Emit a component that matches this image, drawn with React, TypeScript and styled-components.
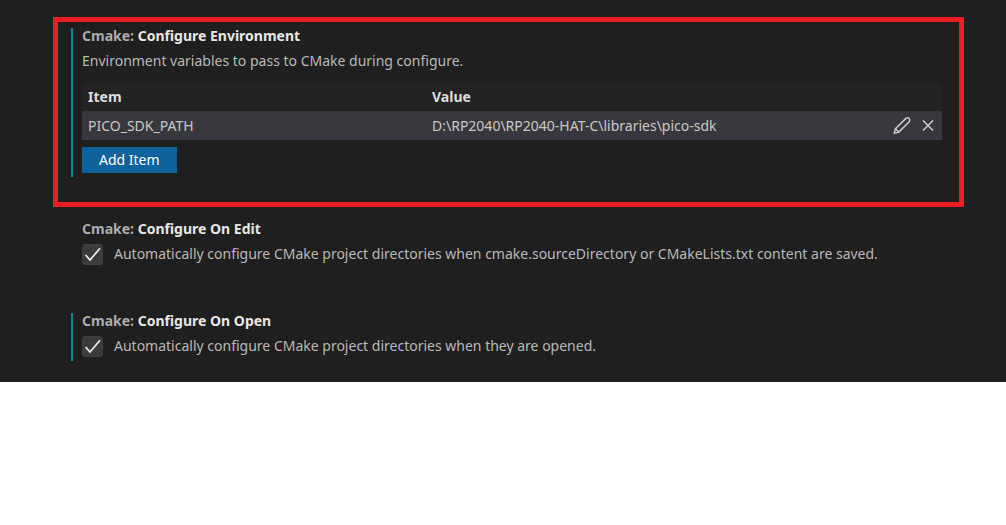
import React from "react";
import styled, { createGlobalStyle } from "styled-components";

const GlobalStyle = createGlobalStyle`
  * { box-sizing: border-box; }
  body {
    margin: 0;
    background: #ffffff;
    font-family: "Segoe UI", "Noto Sans", sans-serif;
    font-size: 14px;
    color: #b9b9b9;
  }
`;

const Panel = styled.main`
  background: #1f1f1f;
  padding: 17px 42px 21px 53px;
`;

const Highlight = styled.div`
  border: 5px solid #ee1c25;
  padding: 6px 17px 25px 13px;
  margin-bottom: 14px;
`;

const SettingList = styled.div`
  display: flex;
  flex-direction: column;
  gap: 44px;
  padding-left: 18px;
`;

const Setting = styled.section<{ $modified?: boolean }>`
  border-left: 2px solid ${(p) => (p.$modified ? "#0b83a4" : "transparent")};
  padding: 0 0 4px 9px;
`;

const Title = styled.h2`
  margin: 0 0 7px;
  font-size: 14px;
  line-height: 16px;
  font-weight: 700;
  color: #e7e7e7;
`;

const Category = styled.span`
  color: #acacac;
`;

const Description = styled.p`
  margin: 0 0 12px;
  line-height: 20px;
`;

const Table = styled.table`
  width: 100%;
  table-layout: fixed;
  border-collapse: collapse;
  line-height: 20px;
  text-align: left;
`;

const HeadRow = styled.tr`
  height: 28px;
  background: #232323;
  color: #dddddd;
`;

const ItemRow = styled.tr`
  height: 29px;
  background: #38373d;
  color: #c8c8c8;
`;

const HeadCell = styled.th<{ $width?: string }>`
  width: ${(p) => p.$width ?? "auto"};
  padding: 0 6px;
  font-weight: 700;
`;

const Cell = styled.td`
  padding: 0 4px 0 6px;
`;

const Actions = styled.div`
  display: flex;
  justify-content: flex-end;
  gap: 6px;
`;

const IconButton = styled.button`
  display: flex;
  padding: 0;
  border: 0;
  background: none;
  color: #cccccc;
`;

const AddButton = styled.button`
  display: block;
  height: 26px;
  margin-top: 7px;
  padding: 0 17px;
  border: 0;
  background: #0e639c;
  color: #ffffff;
  font: inherit;
  line-height: 20px;
`;

const CheckLabel = styled.label`
  display: flex;
  align-items: flex-start;
  gap: 11px;
  line-height: 20px;
`;

const CheckBox = styled.span`
  display: grid;
  flex: none;
  width: 21px;
  height: 21px;

  > * {
    grid-area: 1 / 1;
  }

  svg {
    pointer-events: none;
  }

  input:not(:checked) + svg {
    visibility: hidden;
  }
`;

const CheckInput = styled.input`
  appearance: none;
  width: 21px;
  height: 21px;
  margin: 0;
  border: 1px solid #404040;
  border-radius: 3px;
  background: #3b3b3b;
`;

const PencilIcon = () => (
  <svg width="20" height="20" viewBox="0 0 20 20" fill="none" stroke="currentColor" strokeWidth="1.5" strokeLinejoin="round" aria-hidden="true">
    <path d="M2.2 17.4 3.4 12.8 13.9 2.4Q15.4 1.2 17.2 2.4 18.5 4.2 17.2 5.7L6.8 16.1Z" />
    <path d="M3.4 12.8 6.8 16.1" />
  </svg>
);

const CloseIcon = () => (
  <svg width="20" height="20" viewBox="0 0 20 20" fill="none" stroke="currentColor" strokeWidth="1.6" aria-hidden="true">
    <path d="M5 4.5 15 14.5M15 4.5 5 14.5" />
  </svg>
);

function SettingTitle({ name }: { name: string }) {
  return (
    <Title>
      <Category>Cmake:</Category> {name}
    </Title>
  );
}

function ToggleSetting({ name, text, modified }: { name: string; text: string; modified?: boolean }) {
  return (
    <Setting $modified={modified}>
      <SettingTitle name={name} />
      <CheckLabel>
        <CheckBox>
          <CheckInput type="checkbox" defaultChecked />
          <svg width="21" height="21" viewBox="0 0 21 21" fill="none" stroke="#f0f0f0" strokeWidth="1.7" aria-hidden="true">
            <path d="M3.5 11 8 16 18 4.3" />
          </svg>
        </CheckBox>
        {text}
      </CheckLabel>
    </Setting>
  );
}

export default function App() {
  return (
    <>
      <GlobalStyle />
      <Panel>
        <Highlight>
          <Setting $modified>
            <SettingTitle name="Configure Environment" />
            <Description>Environment variables to pass to CMake during configure.</Description>
            <Table>
              <thead>
                <HeadRow>
                  <HeadCell $width="40%">Item</HeadCell>
                  <HeadCell>Value</HeadCell>
                  <HeadCell as="td" $width="64px" />
                </HeadRow>
              </thead>
              <tbody>
                <ItemRow>
                  <Cell>PICO_SDK_PATH</Cell>
                  <Cell>D:\RP2040\RP2040-HAT-C\libraries\pico-sdk</Cell>
                  <Cell>
                    <Actions>
                      <IconButton type="button" aria-label="Edit item">
                        <PencilIcon />
                      </IconButton>
                      <IconButton type="button" aria-label="Remove item">
                        <CloseIcon />
                      </IconButton>
                    </Actions>
                  </Cell>
                </ItemRow>
              </tbody>
            </Table>
            <AddButton type="button">Add Item</AddButton>
          </Setting>
        </Highlight>
        <SettingList>
          <ToggleSetting
            name="Configure On Edit"
            text="Automatically configure CMake project directories when cmake.sourceDirectory or CMakeLists.txt content are saved."
          />
          <ToggleSetting
            modified
            name="Configure On Open"
            text="Automatically configure CMake project directories when they are opened."
          />
        </SettingList>
      </Panel>
    </>
  );
}
